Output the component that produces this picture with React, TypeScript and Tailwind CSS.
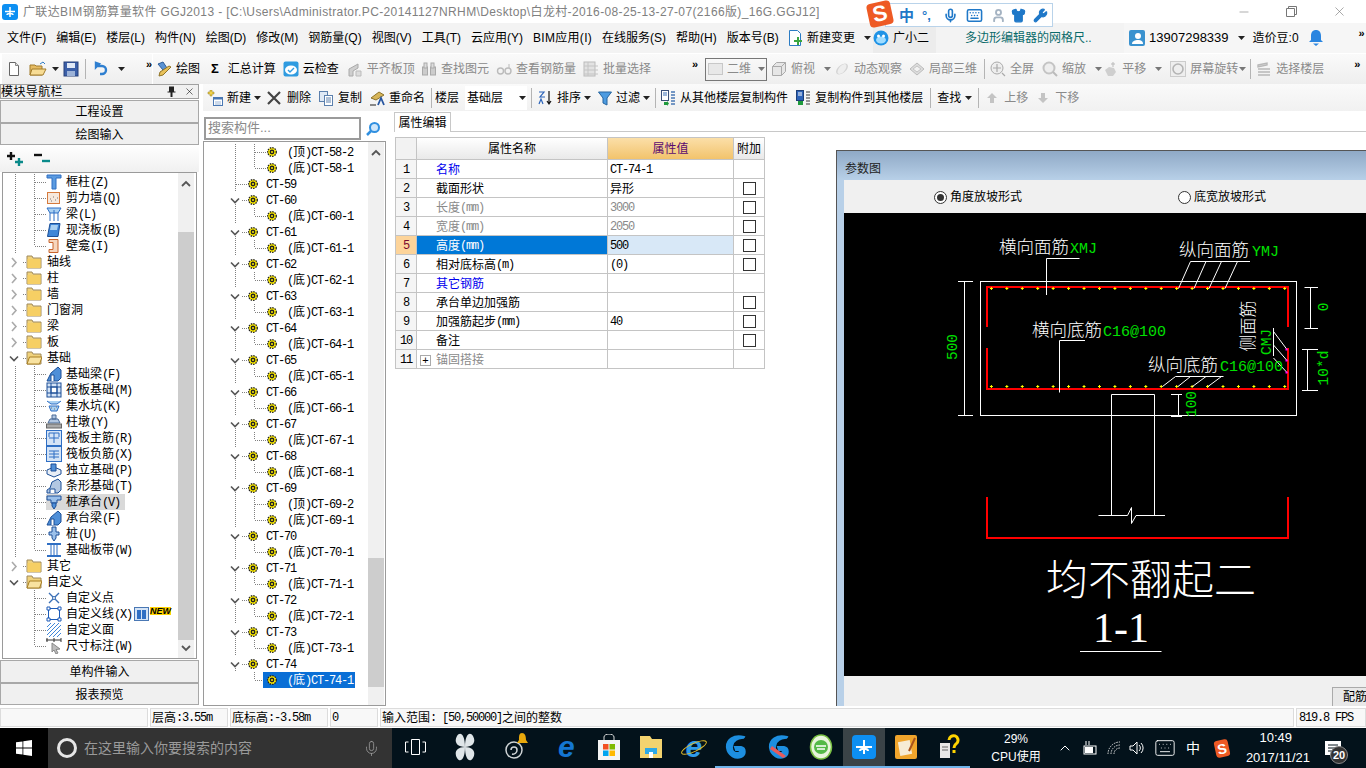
import type { ReactNode } from "react"
import { Keyboard, Mic, Shirt, User, Wrench, X, Minus, ChevronUp } from "lucide-react"

const Svg = ({ children, w = 16, h }: { children: ReactNode; w?: number; h?: number }) => (
  <svg viewBox={`0 0 ${w} ${h ?? w}`} width={w} height={h ?? w} className="shrink-0">
    {children}
  </svg>
)

// SimSun-like mix: cjk 12px wide, latin 6px wide
function Bit({ t }: { t: string }) {
  return (
    <>
      {t.split(/([\u0000-\u00ff]+)/).map((part, i) =>
        /^[\u0000-\u00ff]+$/.test(part) ? (
          <span key={i} className="font-['Liberation_Mono',monospace] text-[12px] tracking-[-1.2px]">{part}</span>
        ) : (
          <span key={i}>{part}</span>
        )
      )}
    </>
  )
}

const Arrow = ({ gray }: { gray?: boolean }) => (
  <svg width="7" height="4" viewBox="0 0 7 4" className="shrink-0"><path d="M0 0h7L3.5 4z" fill={gray ? "#777" : "#222"} /></svg>
)
const More = () => <span className="text-[11px] font-bold leading-none text-black">»</span>
const Sep = () => <div className="h-[20px] w-px shrink-0 bg-[#b4b4b4]" />

function Tool({ icon, label, gray, arrow, className = "" }: { icon?: ReactNode; label?: string; gray?: boolean; arrow?: boolean; className?: string }) {
  return (
    <div className={`flex shrink-0 items-center gap-[4px] ${gray ? "text-[#8a8a8a]" : "text-black"} ${className}`}>
      {icon}
      {label && <span>{label}</span>}
      {arrow && <span className="ml-[5px] flex"><Arrow gray={gray} /></span>}
    </div>
  )
}

/* toolbar icons */
const ic = {
  doc: <Svg><path d="M3.5 1.5h6l3 3v10h-9z" fill="#fff" stroke="#666" /><path d="M9.5 1.5v3h3" fill="#ddd" stroke="#888" /></Svg>,
  open: <Svg w={18} h={16}><path d="M1 4h5l1 1h6v9H1z" fill="#e5bb62" stroke="#a27c2c" /><path d="M3 8h14l-3 6H1z" fill="#f7dc94" stroke="#a27c2c" /><path d="M11 3l3-2 2 2" fill="none" stroke="#2d7bc4" /></Svg>,
  save: <Svg><rect x="1" y="1" width="14" height="14" fill="#3b5fa8" stroke="#26407a" /><rect x="4" y="2" width="8" height="5" fill="#dfe8f6" /><rect x="4" y="10" width="8" height="5" fill="#9db3d8" /></Svg>,
  undo: <Svg><path d="M5 3L2 6v-4zM3 5h5a4 4 0 010 8H6" fill="none" stroke="#2f7fd0" strokeWidth="2.4" /></Svg>,
  draw: <Svg><path d="M2 3l5-2 4 6-4 2z" fill="#5b93d3" stroke="#2e5d98" /><path d="M4 11l9-6 2 1-8 8-4 1z" fill="#e8c15a" stroke="#8f7326" /></Svg>,
  cloud: <Svg><rect x="0.5" y="0.5" width="15" height="15" rx="2" fill="#2f9be0" /><ellipse cx="8" cy="9" rx="6" ry="4.5" fill="#fff" /><path d="M5 9l2 2 4-4" fill="none" stroke="#2f9be0" strokeWidth="1.4" /></Svg>,
  slab: <Svg><path d="M2 8l9-5v4L6 10v5H2z" fill="#cfcfcf" stroke="#aaa" /><path d="M9 10h5v5H9z" fill="#ddd" stroke="#bbb" /></Svg>,
  binoc: <Svg><rect x="1.5" y="6" width="5" height="8" fill="#ccc" stroke="#aaa" /><rect x="9.5" y="6" width="5" height="8" fill="#ccc" stroke="#aaa" /><rect x="3" y="2" width="3" height="5" fill="#ddd" stroke="#aaa" /><rect x="10" y="2" width="3" height="5" fill="#ddd" stroke="#aaa" /></Svg>,
  glasses: <Svg><circle cx="4.5" cy="10" r="3" fill="none" stroke="#bbb" strokeWidth="1.4" /><circle cx="12" cy="10" r="3" fill="none" stroke="#bbb" strokeWidth="1.4" /><path d="M13 7V3" stroke="#bbb" /></Svg>,
  batch: <Svg><rect x="1" y="1" width="11" height="14" fill="#e2e2e2" stroke="#bbb" /><path d="M1 5h14M1 9h14M1 13h14M5 1v14" stroke="#c4c4c4" /></Svg>,
  cube: <Svg><path d="M1.5 5.5l4-4h9v9l-4 4h-9z" fill="#e6e6e6" stroke="#aaa" /><path d="M1.5 5.5h9v9M10.5 5.5l4-4" fill="none" stroke="#aaa" /></Svg>,
  orbit: <Svg><ellipse cx="8" cy="8" rx="7" ry="4" fill="#d4d4d4" transform="rotate(-40 8 8)" /><ellipse cx="8" cy="8" rx="3" ry="6" fill="#eee" transform="rotate(40 8 8)" /></Svg>,
  local3d: <Svg><path d="M1 8l7-6 7 6-7 6z" fill="#ddd" stroke="#bbb" /><path d="M4 8l4-3 4 3-4 3z" fill="#f2f2f2" stroke="#c4c4c4" /></Svg>,
  full: <Svg><circle cx="7" cy="7" r="6" fill="#eee" stroke="#aaa" /><path d="M7 3v8M3 7h8M12 12l3 3" stroke="#aaa" strokeWidth="1.2" /></Svg>,
  zoom: <Svg><circle cx="7" cy="7" r="5.5" fill="#eee" stroke="#c4c4c4" strokeWidth="2" /><path d="M11 11l4 4" stroke="#bbb" strokeWidth="2" /></Svg>,
  pan: <Svg><path d="M3 9l4-3 5 1 2 4-3 4H6z" fill="#cfcfcf" /><path d="M11 1v5M9 3h4" stroke="#bbb" /></Svg>,
  rotate: <Svg><rect x="0.5" y="0.5" width="15" height="15" fill="#eee" stroke="#ccc" /><circle cx="8" cy="8" r="5" fill="none" stroke="#b4b4b4" strokeWidth="1.6" /></Svg>,
  layers: <Svg><path d="M2 4l9-2v2l-9 2zM2 8h12M2 11h12M2 14h12" stroke="#b8b8b8" fill="#ddd" strokeWidth="1.4" /></Svg>,
  newComp: <Svg><path d="M3 0h2v2h2v2H5v2H3V4H1V2h2z" fill="#f2d24b" stroke="#8f7a1c" strokeWidth=".5" /><rect x="6.5" y="7.5" width="9" height="8" fill="#fff" stroke="#4a78b4" /><rect x="6.5" y="7.5" width="9" height="2" fill="#4a78b4" /><path d="M8 12h6M8 14h6" stroke="#9bb5d6" /></Svg>,
  del: <Svg w={14}><path d="M1 1l12 12M13 1L1 13" stroke="#444" strokeWidth="2.2" /></Svg>,
  copy: <Svg><rect x="1.5" y="1.5" width="8" height="10" fill="#dfe9f5" stroke="#5c80ad" /><rect x="6.5" y="5.5" width="8" height="10" fill="#fff" stroke="#5c80ad" /><path d="M8 8h5M8 10h5M8 12h5" stroke="#5c80ad" /></Svg>,
  rename: <Svg><path d="M2 8l8-6 5 3-8 5z" fill="#d7b558" stroke="#8c7228" /><path d="M9 15l3-7 3 7" fill="none" stroke="#2856a0" strokeWidth="1.8" /><path d="M1 15h6" stroke="#888" strokeWidth="2" /></Svg>,
  sort: <Svg><path d="M2 2h5L3 7h5M2 14l2-5 2 5" fill="none" stroke="#2a62b8" strokeWidth="1.2" /><path d="M12 1v12M10 11l2 3 2-3" fill="none" stroke="#111" strokeWidth="1.2" /></Svg>,
  filter: <Svg w={14} h={16}><path d="M0.5 2h13L9 8v7l-4-2V8z" fill="#4d9be0" stroke="#27659f" /></Svg>,
  fromFloor: <Svg><rect x="1.5" y="0.5" width="7" height="10" fill="#fff" stroke="#3a4f78" /><path d="M3 3h4M3 5h4" stroke="#3a6fb5" /><path d="M11 2h4M11 5h4M11 8h4M11 11h4M11 14h4" stroke="#4a78b4" strokeWidth="1.6" /><path d="M4 12h3v-1l2 2.5L7 16v-1H4z" fill="#1f9a3c" /></Svg>,
  toFloor: <Svg><rect x="1.5" y="0.5" width="7" height="10" fill="#2c62b8" stroke="#1d3f78" /><path d="M3 3h4M3 5h4" stroke="#fff" /><path d="M11 2h4M11 5h4M11 8h4M11 11h4M11 14h4" stroke="#777" strokeWidth="1.6" /><rect x="3" y="11" width="5" height="4" fill="#1f9a3c" /></Svg>,
  up: <Svg w={12}><path d="M6 1l5 5H8v5H4V6H1z" fill="#c4c4c4" /></Svg>,
  down: <Svg w={12}><path d="M6 11L1 6h3V1h4v5h3z" fill="#c4c4c4" /></Svg>,
  change: <Svg><path d="M2.5 0.5h8l3 3v12h-11z" fill="#fff" stroke="#2b7cc4" /><path d="M7 10h3V7h2v3h3v2h-3v3h-2v-3H7z" fill="#3aa63f" /></Svg>,
  face: <Svg><circle cx="8" cy="8" r="7.5" fill="#1f93e6" /><ellipse cx="8" cy="10" rx="5" ry="3.5" fill="#9fdcff" /><circle cx="5.5" cy="6" r="1.5" fill="#fff" /><circle cx="10.5" cy="6" r="1.5" fill="#fff" /></Svg>,
  avatar: <Svg><rect width="16" height="16" rx="2" fill="#3a92cf" /><circle cx="9" cy="6" r="3" fill="#fff" /><path d="M3 14c0-3 3-4 6-4s5 1 5 4z" fill="#fff" /></Svg>,
  bell: <Svg w={14} h={16}><path d="M7 0c3 0 5 2 5 6v4l2 2H0l2-2V6c0-4 2-6 5-6z" fill="#2a85e0" /><path d="M4 13.500h6L7 16z" fill="#2a85e0" /></Svg>,
}

function TitleBar() {
  return (
    <div className="flex h-[23px] shrink-0 items-center bg-white pl-[2px]">
      <div className="flex h-[16px] w-[16px] items-center justify-center rounded-[3px] bg-[#0d8ff2] text-[12px] font-bold leading-none text-white">
        <svg width="12" height="12" viewBox="0 0 12 12"><path d="M1 5.500h10M6 1v10M3 9c0-2 6-2 6 0" fill="none" stroke="#fff" strokeWidth="1.5" /></svg>
      </div>
      <span className="ml-[5px] whitespace-nowrap text-[12px] tracking-[0.37px] text-[#808080]">
        广联达BIM钢筋算量软件 GGJ2013 - [C:\Users\Administrator.PC-20141127NRHM\Desktop\白龙村-2016-08-25-13-27-07(2166版)_16G.GGJ12]
      </span>
      <div className="ml-auto flex items-center gap-[35px] pr-[19px] text-[#777]">
        <Minus size={14} strokeWidth={1} />
        <svg width="11" height="11" viewBox="0 0 11 11"><path d="M.5 2.500h8v8h-8zM2.500 2.500v-2h8v8h-2" fill="none" stroke="#777" /></svg>
        <X size={15} strokeWidth={1} />
      </div>
    </div>
  )
}

function SogouBar() {
  return (
    <div className="absolute left-[868px] top-0 flex h-[27px] items-center">
      <div className="z-10 flex h-[24px] w-[24px] -rotate-12 items-center justify-center rounded-[4px] bg-[#ee5a24] font-['Liberation_Sans'] text-[22px] font-bold leading-none text-white">S</div>
      <div className="-ml-[7px] mt-[3px] flex h-[24px] w-[168px] items-center border border-[#b9d3ea] bg-white pl-[13px] text-[#1f78c8]">
        <span className="w-[20px] text-[15px] font-bold leading-none">中</span>
        <span className="w-[24px] pl-[3px] text-[13px] font-bold leading-none">°,</span>
        <Mic size={15} strokeWidth={2.6} className="mr-[8px]" />
        <Keyboard size={17} strokeWidth={2.2} className="mr-[8px]" />
        <User size={15} strokeWidth={3} className="mr-[5px] text-[#a5b3c2]" />
        <Shirt size={15} fill="#1f78c8" className="mr-[7px]" />
        <Wrench size={15} fill="#1f78c8" />
      </div>
    </div>
  )
}

const menus = ["文件(F)", "编辑(E)", "楼层(L)", "构件(N)", "绘图(D)", "修改(M)", "钢筋量(Q)", "视图(V)", "工具(T)", "云应用(Y)", "BIM应用(I)", "在线服务(S)", "帮助(H)", "版本号(B)"]

function MenuBar() {
  return (
    <div className="flex h-[30px] shrink-0 items-center bg-[#f3f3f3] pl-[7px] text-[12px] text-black">
      <div className="flex w-[778px] gap-[10px]">
        {menus.map(m => <span key={m} className={m.startsWith("BIM") ? "tracking-[0.3px]" : ""}>{m}</span>)}
      </div>
      <Tool icon={ic.change} label="新建变更" arrow className="ml-[2px]" />
      <Tool icon={ic.face} label="广小二" className="ml-[2px] h-full bg-[#ececec] pr-[7px]" />
      <span className="ml-[29px] w-[159px] text-[#0a6a6a]">多边形编辑器的网格尺..</span>
      <div className="flex h-full flex-1 items-center bg-[#f6f6f6] pl-[5px]">
        {ic.avatar}
        <span className="ml-[4px] text-[13px]">13907298339</span>
        <span className="ml-[9px] flex"><Arrow /></span>
        <span className="ml-[8px]">造价豆:0</span>
        <span className="ml-[10px]">{ic.bell}</span>
        <span className="ml-[36px] -mt-[10px]"><More /></span>
      </div>
    </div>
  )
}

function ToolRow() {
  return (
    <div className="flex h-[31px] shrink-0 items-center bg-white pt-px text-[12px]">
      <div className="ml-[2px] flex h-full w-[150px] shrink-0 items-center bg-gradient-to-b from-[#fafafa] to-[#eeeeee] pl-[4px]">
        {ic.doc}
        <span className="ml-[7px]">{ic.open}</span>
        <span className="ml-[5px] flex"><Arrow /></span>
        <span className="ml-[4px]">{ic.save}</span>
        <span className="ml-[6px]"><Sep /></span>
        <span className="ml-[8px]">{ic.undo}</span>
        <span className="ml-[8px] flex"><Arrow /></span>
        <span className="ml-[21px] -mt-[10px]"><More /></span>
      </div>
      <div className="ml-px flex h-full flex-1 items-center bg-gradient-to-b from-[#fafafa] to-[#eeeeee] pl-[3px]">
        <Tool icon={ic.draw} label="绘图" />
        <span className="ml-[11px] text-[13px] font-bold text-black">Σ</span>
        <span className="ml-[9px]">汇总计算</span>
        <Tool icon={ic.cloud} label="云检查" className="ml-[7px]" />
        <Tool icon={ic.slab} label="平齐板顶" gray className="ml-[8px]" />
        <Tool icon={ic.binoc} label="查找图元" gray className="ml-[6px]" />
        <Tool icon={ic.glasses} label="查看钢筋量" gray className="ml-[7px]" />
        <Tool icon={ic.batch} label="批量选择" gray className="ml-[7px]" />
        <span className="ml-[41px] -mt-[10px]"><More /></span>
        <div className="ml-[7px] flex h-[23px] w-[62px] shrink-0 items-center border border-[#777] pl-[2px] text-[#8a8a8a]">
          <span className="h-[12px] w-[15px] border border-[#c8c8c8] bg-[#e8e8e8]" />
          <span className="ml-[4px]">二维</span>
          <span className="ml-[7px] flex"><Arrow gray /></span>
        </div>
        <Tool icon={ic.cube} label="俯视" gray arrow className="ml-[4px]" />
        <Tool icon={ic.orbit} label="动态观察" gray className="ml-[3px]" />
        <Tool icon={ic.local3d} label="局部三维" gray className="ml-[7px]" />
        <span className="ml-[7px]"><Sep /></span>
        <Tool icon={ic.full} label="全屏" gray className="ml-[5px]" />
        <Tool icon={ic.zoom} label="缩放" gray arrow className="ml-[8px]" />
        <Tool icon={ic.pan} label="平移" gray arrow />
        <Tool icon={ic.rotate} label="屏幕旋转" gray className="ml-[8px]" />
        <span className="ml-[1px] flex"><Arrow gray /></span>
        <span className="ml-[4px]"><Sep /></span>
        <Tool icon={ic.layers} label="选择楼层" gray className="ml-[5px]" />
        <span className="ml-[30px] -mt-[10px]"><More /></span>
      </div>
    </div>
  )
}

function SecondRow() {
  return (
    <div className="flex h-[27px] shrink-0 items-center bg-gradient-to-b from-[#fafafa] to-[#f1f1f1] pl-[4px] text-[12px]">
      <Tool icon={ic.newComp} label="新建" className="gap-[3px]" />
      <span className="ml-[3px] flex"><Arrow /></span>
      <span className="ml-[6px]">{ic.del}</span>
      <span className="ml-[6px]">删除</span>
      <Tool icon={ic.copy} label="复制" className="ml-[7px]" />
      <Tool icon={ic.rename} label="重命名" className="ml-[7px]" />
      <span className="ml-[6px]"><Sep /></span>
      <span className="ml-[3px]">楼层</span>
      <div className="ml-[6px] flex h-[24px] w-[62px] shrink-0 items-center bg-white pl-[2px]">
        基础层
        <span className="ml-[16px] flex"><Arrow /></span>
      </div>
      <span className="ml-[4px]"><Sep /></span>
      <Tool icon={ic.sort} label="排序" className="ml-[5px]" />
      <span className="ml-[3px] flex"><Arrow /></span>
      <Tool icon={ic.filter} label="过滤" className="ml-[7px]" />
      <span className="ml-[3px] flex"><Arrow /></span>
      <span className="ml-[5px]"><Sep /></span>
      <Tool icon={ic.fromFloor} label="从其他楼层复制构件" className="ml-[4px]" />
      <Tool icon={ic.toFloor} label="复制构件到其他楼层" className="ml-[7px]" />
      <span className="ml-[7px]"><Sep /></span>
      <span className="ml-[6px]">查找</span>
      <span className="ml-[4px] flex"><Arrow /></span>
      <span className="ml-[6px]"><Sep /></span>
      <Tool icon={ic.up} label="上移" gray className="ml-[7px] gap-[6px]" />
      <Tool icon={ic.down} label="下移" gray className="ml-[9px] gap-[6px]" />
    </div>
  )
}

/* nav tree */
const blue = "#2f6fc4"
const nav: Record<string, ReactNode> = {
  col: <Svg><path d="M1 1h14v3H10v11H6V4H1z" fill="#5b9be0" stroke={blue} /></Svg>,
  wall: <Svg><rect x="1.5" y="2.5" width="12" height="11" fill="#f6e8dc" stroke="#d67a3c" /><path d="M4 9h1M7 7h1M9 10h1M5 11h1M11 8h1" stroke="#777" /></Svg>,
  beam: <Svg><path d="M1 2h14l-3 5H4z" fill="#a9d0f2" stroke={blue} /><path d="M4 7v8M12 7v8M8 4v11" stroke={blue} /></Svg>,
  slab: <Svg><path d="M4 1.500h10l-2 13H1.500z" fill="#3f86d8" stroke="#1c4f97" /><path d="M5 3h7l-1 5H4z" fill="#a9d0f2" /></Svg>,
  niche: <Svg><path d="M3 1.500h9v13H3v-3h4v-7H3z" fill="#f6d6bd" stroke="#c8642c" /></Svg>,
  fbeam: <Svg><path d="M1 15l4-8 7-6 3 3v8l-3 3z" fill="#4f8fd8" stroke="#1c4f97" /><path d="M5 15V9h3v6" fill="#fff" stroke="#1c4f97" /></Svg>,
  raft: <Svg><rect x="1" y="1" width="14" height="14" fill="#d5e4f6" stroke="#1c4f97" /><rect x="5" y="5" width="6" height="6" fill="#fff" stroke="#1c4f97" /><path d="M1 5h14M1 11h14M5 1v14M11 1v14" stroke="#1c4f97" /></Svg>,
  pit: <Svg><path d="M1 3l4 3h6l4-3M3 8h10l-2 5H5z" fill="#a9d0f2" stroke={blue} /><path d="M5 10h1M8 11h1M10 9h1" stroke="#777" /></Svg>,
  pier: <Svg><path d="M6 1h4v4H6zM4 5h8l2 4H2z" fill="#b2c7e2" stroke="#4a6a96" /><rect x="0.500" y="10" width="15" height="4" fill="#aaa" stroke="#666" /></Svg>,
  rebar1: <Svg><rect x="0.500" y="0.500" width="15" height="15" fill="#d5e4f6" stroke={blue} /><path d="M3 7V3h10v4M8 3v10M3 8h10" fill="none" stroke={blue} /></Svg>,
  rebar2: <Svg><rect x="0.500" y="0.500" width="15" height="15" fill="#d5e4f6" stroke={blue} /><path d="M3 5h10M3 8h10M3 11h10M8 5v8" fill="none" stroke={blue} /></Svg>,
  iso: <Svg><path d="M1 8l7-3 7 3v4l-7 3-7-3z" fill="#e8eef6" stroke="#1c4f97" /><path d="M5 2h5v7H5z" fill="#4f8fd8" stroke="#1c4f97" /></Svg>,
  strip: <Svg><path d="M1 15v-3l3-2 2-6 6-3 3 3v8l-3 3z" fill="#b2c7e2" stroke="#1c4f97" /><path d="M4 15v-4h5v4" fill="#fff" stroke="#1c4f97" /></Svg>,
  cap: <Svg><path d="M1 2h14v4H11v3H5V6H1z" fill="#9bc0ea" stroke="#1c4f97" /><path d="M6 9h4v3l-2 3-2-3z" fill="#4f8fd8" stroke="#1c4f97" /></Svg>,
  pile: <Svg><path d="M6 1h4v5h3v3h-3v3l-2 3-2-3V9H3V6h3z" fill="#9bc0ea" stroke="#1c4f97" /></Svg>,
  band: <Svg><path d="M1 2h14M1 14h14" stroke={blue} strokeWidth="2" /><path d="M5 3v10M11 3v10M8 3v10" stroke={blue} /></Svg>,
  pt: <Svg><path d="M3 3l10 10M13 3L3 13" stroke="#3a6fb5" strokeWidth="1.4" /><circle cx="8" cy="8" r="1.500" fill="#fff" stroke="#3a6fb5" /></Svg>,
  line: <Svg><rect x="2.500" y="2.500" width="11" height="11" fill="#fff" stroke="#1c5bb8" /><path d="M1 1h3v3H1zM12 1h3v3h-3zM1 12h3v3H1zM12 12h3v3h-3z" fill="#fff" stroke="#1c5bb8" /></Svg>,
  face: <Svg><path d="M1 5l4-4M1 9l8-8M1 13L13 1M3 15L15 3M7 15l8-8M11 15l4-4" stroke="#3f86d8" /></Svg>,
  dim: <Svg><path d="M0 2h15M1 0v4M8 0v4M15 0v4" stroke="#333" /><path d="M6 5l8 6-4 .500 2 3.500-2 1-2-4-2 2z" fill="#bdbdbd" stroke="#888" /></Svg>,
}

const folderIcon = (open?: boolean) => (
  <Svg w={16} h={14}>
    <path d="M1 3V1h5l1 2h8v10H1z" fill="#f0d27c" stroke="#a08a5c" />
    {open ? <path d="M3.500 6H16l-2.500 7H1z" fill="#f8e2a0" stroke="#a87e22" /> : <rect x="1.500" y="4" width="13" height="9" fill="#f6cf64" />}
  </Svg>
)

type NavRow = { t: string; icon?: string; folder?: "open" | "closed"; outer?: boolean; last?: boolean; hi?: boolean; isNew?: boolean }
const navRows: NavRow[] = [
  { t: "框柱(Z)", icon: "col", outer: true },
  { t: "剪力墙(Q)", icon: "wall", outer: true },
  { t: "梁(L)", icon: "beam", outer: true },
  { t: "现浇板(B)", icon: "slab", outer: true },
  { t: "壁龛(I)", icon: "niche", outer: true, last: true },
  { t: "轴线", folder: "closed" },
  { t: "柱", folder: "closed" },
  { t: "墙", folder: "closed" },
  { t: "门窗洞", folder: "closed" },
  { t: "梁", folder: "closed" },
  { t: "板", folder: "closed" },
  { t: "基础", folder: "open" },
  { t: "基础梁(F)", icon: "fbeam", outer: true },
  { t: "筏板基础(M)", icon: "raft", outer: true },
  { t: "集水坑(K)", icon: "pit", outer: true },
  { t: "柱墩(Y)", icon: "pier", outer: true },
  { t: "筏板主筋(R)", icon: "rebar1", outer: true },
  { t: "筏板负筋(X)", icon: "rebar2", outer: true },
  { t: "独立基础(P)", icon: "iso", outer: true },
  { t: "条形基础(T)", icon: "strip", outer: true },
  { t: "桩承台(V)", icon: "cap", outer: true, hi: true },
  { t: "承台梁(F)", icon: "fbeam", outer: true },
  { t: "桩(U)", icon: "pile", outer: true },
  { t: "基础板带(W)", icon: "band", outer: true, last: true },
  { t: "其它", folder: "closed" },
  { t: "自定义", folder: "open" },
  { t: "自定义点", icon: "pt" },
  { t: "自定义线(X)", icon: "line", isNew: true },
  { t: "自定义面", icon: "face" },
  { t: "尺寸标注(W)", icon: "dim", last: true },
]

const dots = { stroke: "#808080", strokeDasharray: "1 1" }

const Chevron = ({ open, x }: { open: boolean; x: number }) =>
  open ? <path d={`M${x - 4} 6.500l4 4 4-4`} fill="none" stroke="#555" strokeWidth="1.600" /> : <path d={`M${x - 2} 4l4 4.500-4 4.500`} fill="none" stroke="#aaa" strokeWidth="1.600" />

function NavTreeRow({ row }: { row: NavRow }) {
  if (row.folder) {
    return (
      <div className="flex h-4 items-center">
        <svg width="23" height="16" className="shrink-0">
          <Chevron open={row.folder === "open"} x={11} />
          <path d="M20 8.500h3" {...dots} />
        </svg>
        {folderIcon(row.folder === "open")}
        <span className="ml-[5px]"><Bit t={row.t} /></span>
      </div>
    )
  }
  return (
    <div className="flex h-4 items-center">
      <svg width="43" height="16" className="shrink-0">
        {row.outer && <path d="M12.500 0v16" {...dots} />}
        <path d={`M31.500 0v${row.last ? 8 : 16}M32 8.500h11`} {...dots} />
      </svg>
      <div className={`flex h-4 items-center ${row.hi ? "w-[79px] bg-[#d9d9d9]" : ""}`}>
        {nav[row.icon!]}
        <span className="ml-[4px]"><Bit t={row.t} /></span>
        {row.isNew && (
          <>
            <span className="ml-[2px] flex h-[14px] w-[15px] items-center justify-center gap-px border border-[#4a78b4] bg-[#d5e4f6]">
              <span className="h-[9px] w-[4px] bg-[#2f6fc4]" /><span className="h-[9px] w-[4px] bg-[#2f6fc4]" />
            </span>
            <span className="-mt-[6px] ml-px bg-[#ffd400] text-[9px] font-bold italic leading-[8px] text-black">NEW</span>
          </>
        )}
      </div>
    </div>
  )
}

const SideBtn = ({ t, h }: { t: string; h: string }) => (
  <div className={`flex shrink-0 items-center justify-center border border-[#a8a8a8] bg-[#f0f0f0] pt-px text-[12px] ${h}`}>
    <Bit t={t} />
  </div>
)

function ScrollArrow({ down }: { down?: boolean }) {
  return (
    <svg width="16" height="16" viewBox="0 0 16 16" className={`shrink-0 ${down ? "rotate-180" : ""}`}>
      <path d="M4 10l4-4 4 4" fill="none" stroke="#555" strokeWidth="1.800" />
    </svg>
  )
}

function LeftPanel() {
  return (
    <div className="flex h-full w-[199px] shrink-0 flex-col text-[12px]">
      <div className="flex h-[15px] shrink-0 items-center justify-between border border-[#a0a0a0] bg-[#f0f0f0] pr-[3px] leading-none">
        <span className="tracking-[0.4px]">模块导航栏</span>
        <div className="flex items-center gap-[8px]">
          <svg width="9" height="11" viewBox="0 0 9 11"><path d="M2 .500h5v5h1.500v1h-3V11h-2V6.500H.500v-1H2z" fill="#222" /></svg>
          <X size={11} strokeWidth={1.200} />
        </div>
      </div>
      <div className="mt-px flex flex-1 flex-col">
        <SideBtn t="工程设置" h="h-[23px]" />
        <SideBtn t="绘图输入" h="h-[22px]" />
        <div className="flex h-[27px] shrink-0 items-center gap-[9px] bg-gradient-to-b from-white to-[#f0f0f0] pl-[6px]">
          <svg width="18" height="16" viewBox="0 0 18 16"><path d="M1 5h8M5 1v8" stroke="#111" strokeWidth="2.400" /><path d="M9 11h8M13 7v8" stroke="#0a8a8a" strokeWidth="2.400" /></svg>
          <svg width="18" height="16" viewBox="0 0 18 16"><path d="M1 4h8" stroke="#111" strokeWidth="2.400" /><path d="M9 10h8" stroke="#0a8a8a" strokeWidth="2.400" /></svg>
        </div>
        <div className="mx-[2px] flex h-[487px] shrink-0 border border-[#9a9a9a] bg-white">
          <div className="min-w-0 flex-1 overflow-hidden pt-px">
            {navRows.map((r, i) => <NavTreeRow key={i} row={r} />)}
          </div>
          <div className="mr-[2px] flex w-[16px] shrink-0 flex-col bg-[#f0f0f0]">
            <div className="h-[59px] shrink-0 pt-[3px]"><ScrollArrow /></div>
            <div className="h-[408px] shrink-0 bg-[#cdcdcd]" />
            <ScrollArrow down />
          </div>
        </div>
        <div className="mt-px flex flex-col">
          <SideBtn t="单构件输入" h="h-[23px]" />
          <SideBtn t="报表预览" h="h-[22px]" />
        </div>
      </div>
    </div>
  )
}

/* component tree */
const Gear = () => (
  <svg width="10" height="10" viewBox="0 0 10 10" className="shrink-0">
    <circle cx="5" cy="5" r="4.300" fill="#ffee00" stroke="#222" strokeWidth="1.300" strokeDasharray="1.500 1" />
    <circle cx="5" cy="5" r="2.400" fill="#222" />
    <circle cx="5" cy="5" r="1" fill="#ffee00" />
  </svg>
)

type CtRow = { t: string; child?: boolean; parent?: boolean; more?: boolean; last?: boolean; sel?: boolean }

const buildCt = (): CtRow[] => {
  const rows: CtRow[] = [
    { t: "(顶)CT-58-2", child: true, more: true },
    { t: "(底)CT-58-1", child: true },
    { t: "CT-59" },
  ]
  for (let n = 60; n <= 74; n++) {
    rows.push({ t: `CT-${n}`, parent: true })
    if (n === 69) rows.push({ t: "(顶)CT-69-2", child: true, more: true })
    rows.push({ t: `(底)CT-${n}-1`, child: true, last: n === 74, sel: n === 74 })
  }
  return rows
}

function CtTreeRow({ row }: { row: CtRow }) {
  if (row.child) {
    const w = row.sel ? 59 : 63
    return (
      <div className="flex h-4 items-center">
        <svg width={w} height="16" className="shrink-0">
          {!row.last && <path d="M31.500 0v16" {...dots} />}
          <path d={`M50.500 0v${row.more ? 16 : 8}M51 8.500h${w - 51}`} {...dots} />
        </svg>
        <div className={`flex h-4 items-center ${row.sel ? "w-[92px] bg-[#0a6fd6] pl-[4px] text-white" : ""}`}>
          <Gear />
          <span className="ml-[10px]"><Bit t={row.t} /></span>
        </div>
      </div>
    )
  }
  return (
    <div className="flex h-4 items-center">
      <svg width="44" height="16" className="shrink-0">
        {row.parent ? (
          <>
            <Chevron open x={31} />
            <path d="M38 8.500h6" {...dots} />
            <path d="M31.500 12v4" {...dots} />
          </>
        ) : (
          <path d="M31.500 0v16M32 8.500h12" {...dots} />
        )}
      </svg>
      <Gear />
      <span className="ml-[8px]"><Bit t={row.t} /></span>
    </div>
  )
}

function ComponentTree() {
  return (
    <div className="flex w-[187px] shrink-0 flex-col text-[12px]">
      <div className="flex h-[30px] shrink-0 items-end pb-px pl-px">
        <div className="flex h-[23px] w-[157px] items-center border-2 border-[#9a9a9a] pb-[2px] pl-[2px] text-[13px] text-[#8a8a8a]">搜索构件...</div>
        <svg width="16" height="16" viewBox="0 0 16 16" className="mb-[3px] ml-[4px] shrink-0">
          <circle cx="9.500" cy="6.500" r="4.500" fill="#cfe6fa" stroke="#2f8fe0" strokeWidth="2" />
          <path d="M6 10l-4 4" stroke="#2f8fe0" strokeWidth="2.500" />
        </svg>
      </div>
      <div className="mb-[2px] mr-[4px] flex min-h-0 flex-1 border border-[#9a9a9a] bg-white">
        <div className="min-w-0 flex-1 overflow-hidden pt-[2px]">
          {buildCt().map((r, i) => <CtTreeRow key={i} row={r} />)}
        </div>
        <div className="mr-px flex w-[16px] shrink-0 flex-col bg-[#f0f0f0]">
          <div className="h-[416px] shrink-0 pt-[3px]"><ScrollArrow /></div>
          <div className="h-[129px] shrink-0 bg-[#cdcdcd]" />
          <div className="flex-1" />
        </div>
      </div>
    </div>
  )
}

/* properties table */
type Prop = { name: string; value?: string; tone?: "link" | "gray"; box: boolean; sel?: boolean; plus?: boolean }
const props: Prop[] = [
  { name: "名称", value: "CT-74-1", tone: "link", box: false },
  { name: "截面形状", value: "异形", box: true },
  { name: "长度(mm)", value: "3000", tone: "gray", box: true },
  { name: "宽度(mm)", value: "2050", tone: "gray", box: true },
  { name: "高度(mm)", value: "500", box: true, sel: true },
  { name: "相对底标高(m)", value: "(0)", box: true },
  { name: "其它钢筋", tone: "link", box: false },
  { name: "承台单边加强筋", box: true },
  { name: "加强筋起步(mm)", value: "40", box: true },
  { name: "备注", box: true },
  { name: "锚固搭接", tone: "gray", box: false, plus: true },
]

const cellBase = "flex shrink-0 items-center border-b border-r border-[#c4c4c4]"

function PropTable() {
  return (
    <div className="w-[370px] border-l border-t border-[#c4c4c4] text-[12px]">
      <div className="flex h-[22px]">
        <div className={`${cellBase} w-[21px] bg-[#f2f2f2]`} />
        <div className={`${cellBase} w-[191px] justify-center bg-gradient-to-b from-white to-[#e9e9e9] pt-px`}>属性名称</div>
        <div className={`${cellBase} w-[126px] justify-center bg-gradient-to-b from-[#fbdfa8] to-[#f2c36b] pt-px text-[#5a0a70]`}>属性值</div>
        <div className={`${cellBase} w-[31px] justify-center bg-gradient-to-b from-white to-[#e9e9e9] pt-px`}>附加</div>
      </div>
      {props.map((p, i) => (
        <div key={p.name} className="flex h-[19px]">
          <div className={`${cellBase} w-[21px] justify-center pt-[2px] ${p.sel ? "bg-[#fdd49a] text-[#7a0a30]" : "bg-[#f5f5f5]"}`}>
            <Bit t={String(i + 1)} />
          </div>
          <div className={`${cellBase} w-[191px] pt-[2px] ${p.sel ? "bg-[#0078d7] text-white" : p.tone === "link" ? "text-[#0000ee]" : p.tone === "gray" ? "text-[#8a8a8a]" : ""}`}>
            {p.plus ? (
              <span className="ml-[3px] mr-[5px] flex h-[11px] w-[11px] items-center justify-center border border-[#aaa] text-[11px] leading-none text-black">+</span>
            ) : (
              <span className="w-[19px] shrink-0" />
            )}
            <Bit t={p.name} />
          </div>
          <div className={`${cellBase} w-[126px] pl-[2px] pt-[2px] ${p.sel ? "bg-[#d8e8f7]" : ""} ${p.tone === "gray" ? "text-[#8a8a8a]" : ""}`}>
            {p.value && <Bit t={p.value} />}
          </div>
          <div className={`${cellBase} w-[31px] justify-center`}>
            {p.box && <div className="h-[13px] w-[13px] border border-[#333] bg-white" />}
          </div>
        </div>
      ))}
    </div>
  )
}

/* parameter drawing */
const zh = "'Noto Sans CJK SC', sans-serif"
const num = "'Liberation Serif', serif"
const mono = "'Liberation Mono', monospace"

function Label({ x, y, cn, en, ex }: { x: number; y: number; cn: string; en: string; ex: number }) {
  return (
    <>
      <text x={x} y={y} fill="#fff" fontSize="17.500" fontFamily={zh} fontWeight="300">{cn}</text>
      <text x={ex} y={y} fill="#00e000" fontSize="15" fontFamily={mono}>{en}</text>
    </>
  )
}

function Drawing() {
  const w = { stroke: "#fff", fill: "none", strokeWidth: 1 }
  const r = { stroke: "#f00", fill: "none", strokeWidth: 2 }
  const dotsX = Array.from({ length: 20 }, (_, i) => 991.4 + i * 15.44)
  const plus = (x: number, y: number) => <path key={`${x}-${y}`} d={`M${x - 1.500} ${y}h3M${x} ${y - 1.500}v3`} stroke="#ff0" strokeWidth="1" />
  const rotText = (x: number, y: number, t: string, size = 14.500) => (
    <text x={x} y={y} transform={`rotate(-90 ${x} ${y})`} textAnchor="middle" fill="#00e000" fontSize={size} fontFamily={mono}>{t}</text>
  )
  return (
    <svg viewBox="844 213 522 463" width="522" height="463" className="block shrink-0 bg-black">
      <rect x="980.500" y="281.500" width="316" height="134" {...w} />
      <path d="M987 327V287H1288V327M987 348V389H1288V348" {...r} />
      {dotsX.map(x => plus(x, 288.500))}
      {dotsX.map(x => plus(x, 386.500))}
      <Label x={999} y={253} cn="横向面筋" en="XMJ" ex={1070} />
      <path d="M1079.500 258.500H1046.500V295" {...w} />
      <Label x={1179} y={256} cn="纵向面筋" en="YMJ" ex={1252} />
      <path d="M1250 261.500H1190.500L1178.500 288.500M1206 261.500L1194 288.500M1221.500 261.500L1209 288.500M1237.500 261.500L1225 288.500" {...w} />
      <path d="M964.500 281.500V415.500M958 281.500H973M958 415.500H973" {...w} />
      {rotText(957, 347, "500")}
      <path d="M1310.500 287V328.500M1304.500 287.500H1318M1304.500 328.500H1318" {...w} />
      {rotText(1328, 307, "0")}
      <path d="M1307.500 349.500V390.500M1302 349.500H1318M1302 390.500H1318" {...w} />
      {rotText(1328, 368, "10*d")}
      <path d="M1178.500 394.500V416.500M1171 394.500H1182M1171 416.500H1182" {...w} />
      {rotText(1196, 404, "100")}
      <Label x={1032} y={336} cn="横向底筋" en="C16@100" ex={1103} />
      <path d="M1085 340.500H1059.500V392.500" {...w} />
      <text x="1254" y="326" transform="rotate(-90 1254 326)" textAnchor="middle" fill="#fff" fontSize="17" fontFamily={zh} fontWeight="300">侧面筋</text>
      {rotText(1271, 342, "CMJ")}
      <path d="M1273.500 328V356M1273.500 331.500L1287 349.500M1273.500 345L1287 360.500M1273.500 358L1287 372.500" {...w} />
      {[349.500, 360.500, 372.500].map(y => <rect key={y} x="1285.500" y={y - 1} width="2" height="2" fill="#f0f" />)}
      <Label x={1148} y={371} cn="纵向底筋" en="C16@100" ex={1220} />
      <path d="M1223.500 376.500H1175.500L1162.500 386.500M1190.500 376.500L1178 386.500M1206 376.500L1192.500 386.500M1221.500 376.500L1208 386.500" {...w} />
      <path d="M1111.500 515V394.500H1154.500V515M1098.500 515.500H1127.500L1131.500 507.500V523.500L1136 515.500H1165" {...w} />
      <path d="M987 497V538H1288V497" {...r} />
      <text x="1046" y="595" fill="#fff" fontSize="42" fontFamily={zh} fontWeight="300">均不翻起二</text>
      <text x="1093" y="642" fill="#fff" fontSize="42" fontFamily={num}>1-1</text>
      <path d="M1080 651.500H1161.500" {...w} />
    </svg>
  )
}

function ParamWindow() {
  return (
    <div className="flex h-full flex-col border-l border-t border-[#555] bg-[#b8d0e8] pl-[7px]">
      <div className="-ml-[7px] flex h-[29px] shrink-0 items-center bg-gradient-to-b from-[#8fa9c6] to-[#b8d0e8] pl-[8px] pt-[6px] text-[12px] text-[#222]">参数图</div>
      <div className="flex h-[33px] shrink-0 items-center bg-[#f0f0f0] pt-px text-[12px]">
        <span className="ml-[90px] flex h-[13px] w-[13px] items-center justify-center rounded-full border border-[#333] bg-white">
          <span className="h-[7px] w-[7px] rounded-full bg-[#333]" />
        </span>
        <span className="ml-[3px]">角度放坡形式</span>
        <span className="ml-[156px] h-[13px] w-[13px] rounded-full border border-[#333] bg-white" />
        <span className="ml-[3px]">底宽放坡形式</span>
      </div>
      <Drawing />
      <div className="flex flex-1 items-end justify-end bg-[#f0f0f0]">
        <div className="h-[19px] w-[34px] overflow-hidden border-l border-t border-[#aaa] bg-[#e8e8e8] pl-[10px] text-[12px]">配筋</div>
      </div>
    </div>
  )
}

function PropertyArea() {
  return (
    <div className="flex min-w-0 flex-1 flex-col pl-[4px]">
      <div className="flex h-[21px] shrink-0 items-end border-b border-[#c8c8c8]">
        <div className="-mb-px flex h-[20px] w-[57px] items-center justify-center border-x border-t border-[#c8c8c8] bg-white text-[12px]">属性编辑</div>
      </div>
      <div className="flex min-h-0 flex-1">
        <div className="w-[442px] shrink-0 pl-px pt-[5px]">
          <PropTable />
        </div>
        <div className="mb-[2px] mt-[18px] min-w-0 flex-1"><ParamWindow /></div>
      </div>
    </div>
  )
}

function StatusBar() {
  const cell = "flex h-[19px] shrink-0 items-center border border-[#dcdcdc] bg-[#f8f8f8] pl-[1px]"
  return (
    <div className="flex h-[20px] shrink-0 gap-[2px] bg-white text-[12px]">
      <div className={`${cell} w-[148px]`} />
      <div className={`${cell} w-[78px]`}><Bit t="层高:3.55m" /></div>
      <div className={`${cell} w-[98px]`}><Bit t="底标高:-3.58m" /></div>
      <div className={`${cell} w-[48px]`}><Bit t="0" /></div>
      <div className={`${cell} w-[914px]`}><Bit t="输入范围: [50,50000]之间的整数" /></div>
      <div className={`${cell} flex-1 pl-[2px]`}><Bit t="819.8 FPS" /></div>
    </div>
  )
}

/* windows taskbar */
const Task = ({ children, w = "w-[42.5px]", on, active, className = "" }: { children: ReactNode; w?: string; on?: boolean; active?: boolean; className?: string }) => (
  <div className={`flex h-full shrink-0 items-center justify-center border-b-2 ${w} ${on ? "border-[#6fb3ea]" : "border-transparent"} ${active ? "bg-[#3a4347]" : ""} ${className}`}>
    {children}
  </div>
)

const GIcon = ({ red }: { red?: boolean }) => (
  <svg width="24" height="26" viewBox="0 0 24 26">
    <path d="M20 3C10 0 2 6 3 14s9 11 14 9 5-9 0-10h-6l1 3h4c1 3-3 4-6 2s-3-9 2-12 7-1 8-3z" fill="#1d8fe0" stroke="#1d8fe0" strokeWidth="2" />
    {red && <path d="M5 12l14 10-3 2L3 15z" fill="#e85a5a" />}
  </svg>
)

function Taskbar() {
  return (
    <div className="flex h-[40px] shrink-0 bg-[#03121b] text-white">
      <div className="flex w-[48px] shrink-0 items-center justify-center bg-black">
        <svg width="16" height="16" viewBox="0 0 16 16"><path d="M0 2.300l6.500-.9v6.200H0zM7.300 1.300L16 0v7.600H7.300zM0 8.400h6.500v6.200L0 13.700zM7.300 8.400H16V16l-8.700-1.200z" fill="#fff" /></svg>
      </div>
      <div className="flex w-[344px] shrink-0 items-center bg-[#333333] pl-[9px] text-[#9a9a9a]">
        <span className="h-[20px] w-[20px] rounded-full border-[3px] border-[#e6e6e6]" />
        <span className="ml-[7px] text-[14px]">在这里输入你要搜索的内容</span>
        <Mic size={17} strokeWidth={1} className="ml-auto mr-[12px] text-[#aaa]" />
      </div>
      <Task w="w-[47px]">
        <svg width="21" height="16" viewBox="0 0 21 16"><path d="M6.500.500h8v15h-8zM3.500 3h-3v10h3M17.500 3h3v10h-3" fill="none" stroke="#fff" /></svg>
      </Task>
      <Task w="w-[52px]">
        <svg width="22" height="28" viewBox="0 0 22 28"><path d="M11 14C2 14 0 8 3 3s8-2 8 11zM11 14c9 0 11-6 8-11s-8-2-8 11zM11 14c-9 0-11 6-8 11s8 2 8-11zM11 14c9 0 11 6 8 11s-8 2-8-11z" fill="#dfe5e8" /></svg>
      </Task>
      <Task w="w-[50px]">
        <svg width="28" height="30" viewBox="0 0 28 30">
          <circle cx="12" cy="18" r="8" fill="none" stroke="#cfd4d6" strokeWidth="1.500" />
          <path d="M9 18a3 3 0 116 0 4 4 0 01-5 4" fill="none" stroke="#cfd4d6" strokeWidth="1.500" />
          <path d="M20 1c3 0 4 3 4 7l2 3H15l2-3c0-4 0-7 3-7z" fill="#e8a80c" />
        </svg>
      </Task>
      <Task className="ml-[4px]">
        <span className="font-['Liberation_Sans'] text-[30px] font-bold italic leading-none text-[#1476d2]">e</span>
      </Task>
      <Task>
        <svg width="22" height="26" viewBox="0 0 22 26">
          <rect y="6" width="22" height="20" fill="#f4f4f4" /><path d="M6 6V3a5 3 0 0110 0v3" fill="none" stroke="#ddd" />
          <rect x="5" y="10" width="5.500" height="5.500" fill="#f25022" /><rect x="11.500" y="10" width="5.500" height="5.500" fill="#7fba00" />
          <rect x="5" y="16.500" width="5.500" height="5.500" fill="#00a4ef" /><rect x="11.500" y="16.500" width="5.500" height="5.500" fill="#ffb900" />
        </svg>
      </Task>
      <Task>
        <svg width="22" height="24" viewBox="0 0 22 24">
          <path d="M0 1h10l2 3h10v19H0z" fill="#f3d36f" /><rect x="5" y="13" width="12" height="6" fill="#2da8e6" /><rect x="9" y="17" width="4" height="6" fill="#fff" />
        </svg>
      </Task>
      <Task>
        <div className="relative flex items-center justify-center">
          <span className="font-['Liberation_Sans'] text-[30px] font-bold italic leading-none text-[#2f9ce8]">e</span>
          <span className="absolute h-[9px] w-[28px] -rotate-[25deg] rounded-[50%] border border-[#e8c02c]" />
        </div>
      </Task>
      <Task on><GIcon /></Task>
      <Task on><GIcon red /></Task>
      <Task on>
        <svg width="24" height="26" viewBox="0 0 24 26"><ellipse cx="12" cy="13" rx="10.500" ry="12" fill="#e8f4dc" stroke="#7ac143" strokeWidth="1.500" /><circle cx="12" cy="13" r="7" fill="#54b948" /><path d="M7 12h10M8 15h8" stroke="#fff" strokeWidth="1.500" /></svg>
      </Task>
      <Task on active>
        <div className="flex h-[24px] w-[24px] items-center justify-center rounded-[4px] bg-[#0d8ff2]">
          <svg width="18" height="18" viewBox="0 0 18 18"><path d="M1 9h16M9 2v14M5 13c0-3 8-3 8 0" fill="none" stroke="#fff" strokeWidth="2" /></svg>
        </div>
      </Task>
      <Task on>
        <svg width="24" height="26" viewBox="0 0 24 26"><rect x="1" y="1" width="22" height="24" rx="2" fill="#f0a52c" /><rect x="5" y="7" width="12" height="14" fill="#f7ecd5" transform="rotate(-10 11 14)" /><path d="M15 17L21 4" stroke="#a8531b" strokeWidth="2" /></svg>
      </Task>
      <Task on>
        <svg width="22" height="26" viewBox="0 0 22 26"><rect x="2" y="9" width="10" height="15" fill="#e8e8e8" /><path d="M4 13h6M4 16h6" stroke="#666" /><path d="M11 6a4.500 4.500 0 118 3c-2 2-3 2-3 5" fill="none" stroke="#ffd400" strokeWidth="3" /><rect x="14.500" y="16" width="3" height="3" fill="#ffd400" /></svg>
      </Task>
      <div className="flex w-[92px] shrink-0 flex-col items-center justify-center text-[12px] leading-[18px]">
        <span>29%</span>
        <span>CPU使用</span>
      </div>
      <div className="flex flex-1 items-center">
        <ChevronUp size={16} strokeWidth={1.500} className="-ml-[5px]" />
        <svg width="16" height="14" viewBox="0 0 16 14" className="ml-[9px]"><rect x="2" y="5" width="12" height="8" fill="none" stroke="#fff" /><rect x="3" y="6" width="8" height="6" fill="#fff" /><path d="M4 0v4M7 0v4" stroke="#fff" /></svg>
        <svg width="16" height="14" viewBox="0 0 16 14" className="ml-[9px]"><path d="M1 13A12 12 0 0113 1M4 13a9 9 0 019-9M7 13a6 6 0 016-6" fill="none" stroke="#ddd" strokeDasharray="1.500 1" /></svg>
        <svg width="16" height="14" viewBox="0 0 16 14" className="ml-[6px]"><path d="M1 5h3l4-4v12l-4-4H1zM10 4a4 4 0 010 6M12 2a7 7 0 010 10" fill="none" stroke="#fff" /></svg>
        <Keyboard size={22} strokeWidth={1} className="ml-[9px]" />
        <span className="ml-[10px] text-[14px]">中</span>
        <span className="ml-[15px] flex h-[17px] w-[14px] -rotate-12 items-center justify-center rounded-[3px] bg-[#ee5a24] font-['Liberation_Sans'] text-[14px] font-bold leading-none">S</span>
        <div className="ml-[1px] flex w-[80px] shrink-0 flex-col items-end text-[13px] leading-[20px]">
          <span className="pr-[18px]">10:49</span>
          <span>2017/11/21</span>
        </div>
        <div className="relative ml-[15px] flex">
          <svg width="16" height="14" viewBox="0 0 16 14"><path d="M0 0h16v14H0z" fill="#fff" /><path d="M3 4h10M3 7h10M3 10h10" stroke="#03121b" /></svg>
          <span className="absolute -bottom-[9px] left-[5px] flex h-[18px] w-[18px] items-center justify-center rounded-full border border-[#888] bg-[#333] text-[11px] font-bold">20</span>
        </div>
      </div>
    </div>
  )
}

export default function App() {
  return (
    <div className="relative flex h-[768px] w-[1366px] flex-col overflow-hidden whitespace-nowrap bg-white font-['Liberation_Sans','Noto_Sans_CJK_SC',sans-serif] text-[12px] text-black">
      <TitleBar />
      <SogouBar />
      <MenuBar />
      <ToolRow />
      <div className="flex h-[624px] shrink-0">
        <LeftPanel />
        <div className="ml-[4px] flex min-w-0 flex-1 flex-col">
          <SecondRow />
          <div className="flex min-h-0 flex-1">
            <ComponentTree />
            <PropertyArea />
          </div>
        </div>
      </div>
      <StatusBar />
      <Taskbar />
    </div>
  )
}
